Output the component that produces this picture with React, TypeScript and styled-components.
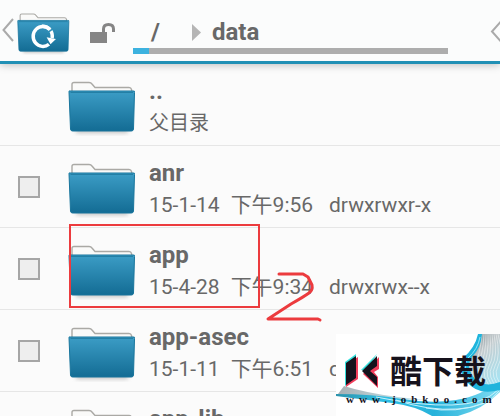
import React from "react";
import styled, { createGlobalStyle } from "styled-components";

const Global = createGlobalStyle`
  * { box-sizing: border-box; }
  html, body { margin: 0; background: #fbfbfb; }
  body { font-family: Roboto, "Noto Sans CJK SC", sans-serif; color: #686868; }
  button, input { font: inherit; color: inherit; }
`;

const Screen = styled.main`
  position: relative;
  height: 100vh;
  overflow: hidden;
`;

const Header = styled.header`
  display: flex;
  align-items: flex-start;
  height: 64px;
  background: #fbfcfc;
  border-bottom: 3px solid #2190b5;
  box-shadow: 0 1px 8px rgba(0, 0, 0, 0.25);
  position: relative;
`;

const PlainButton = styled.button`
  display: flex;
  padding: 0;
  border: 0;
  background: none;
`;

const BackButton = styled(PlainButton)`
  padding: 12px 0 0 2px;
`;

const LockButton = styled(PlainButton)`
  margin: 22px 17px 0 19px;
`;

const MoreButton = styled(PlainButton)`
  margin: 21px 0 0 42px;
`;

const PathBar = styled.nav`
  flex: 1;
  padding-top: 16px;
`;

const Crumbs = styled.div`
  display: flex;
  align-items: center;
  height: 32px;
  padding-left: 18px;
`;

const Crumb = styled.a`
  color: inherit;
  text-decoration: none;
  font-size: 24px;
  font-weight: 700;
  line-height: 32px;
`;

const CrumbArrow = styled.svg`
  margin: 0 11px 0 32px;
`;

const Track = styled.div`
  height: 6px;
  background: #adadad;
`;

const Fill = styled.div`
  width: 5%;
  height: 100%;
  background: #3cb2df;
`;

const List = styled.ul`
  margin: 0;
  padding: 0;
  list-style: none;
`;

const Row = styled.li`
  display: grid;
  grid-template-columns: 68px 81px 1fr;
  height: 82px;
  border-bottom: 1px solid #e6e6e6;
`;

const Check = styled.input`
  appearance: none;
  align-self: center;
  width: 22px;
  height: 22px;
  margin: 0 0 0 18px;
  border: 2px solid #a6a6a6;
  background: #eee;
`;

const FolderSlot = styled.div`
  grid-column: 2;
  padding-top: 16px;
`;

const Info = styled.label`
  padding-top: 11px;
  white-space: nowrap;
`;

const Name = styled.div`
  font-size: 24px;
  font-weight: 700;
  line-height: 32px;
`;

const Meta = styled.div`
  display: grid;
  grid-template-columns: 180px 1fr;
  font-size: 21px;
  line-height: 32px;
`;

const Stamp = styled.span`
  display: flex;
  gap: 11px;
`;

const Parent = styled.div`
  font-size: 20px;
  line-height: 32px;
`;

const Highlight = styled.div`
  position: absolute;
  left: 69px;
  top: 224px;
  width: 191px;
  height: 84px;
  border: 2px solid #ec3b3e;
`;

const Stroke = styled.svg`
  position: absolute;
  left: 262px;
  top: 268px;
`;

const Brand = styled.a`
  position: absolute;
  right: 0;
  bottom: 0;
  display: grid;
  grid-template-rows: 59px 23px;
  width: 164px;
  background: #fff;
  color: #16121c;
  text-decoration: none;
  white-space: nowrap;
`;

const BrandArt = styled.svg`
  position: absolute;
  inset: 0;
`;

const BrandName = styled.span`
  position: relative;
  padding: 15px 0 0 54px;
  font-family: "Noto Sans CJK SC", sans-serif;
  font-size: 32px;
  font-weight: 700;
  line-height: 40px;
`;

const BrandSite = styled.span`
  position: relative;
  padding-left: 10px;
  font-family: "Liberation Serif", serif;
  font-size: 11px;
  font-weight: 700;
  line-height: 12px;
  letter-spacing: 5px;
`;

function FolderIcon({ id, width = 68, height = 56, sync = false }: { id: string; width?: number; height?: number; sync?: boolean }) {
  return (
    <svg width={width} height={height} viewBox="0 0 68 56" preserveAspectRatio="none" aria-hidden="true">
      <defs>
        <linearGradient id={id} x1="0" y1="0" x2="0" y2="1">
          <stop offset="0" stopColor="#3c9dc6" />
          <stop offset="1" stopColor="#136c94" />
        </linearGradient>
        <filter id={id + "s"} x="-10%" y="-100%" width="120%" height="300%">
          <feGaussianBlur stdDeviation="2" />
        </filter>
      </defs>
      <rect x="8" y="48" width="52" height="5" fill="#999" opacity=".6" filter={`url(#${id}s)`} />
      <path d="M4 13V4.500Q4 2.500 6 2.500H21Q23 2.500 24 4L27 7.500H61Q63 7.500 63.500 9.500L64 13Z" fill="#fafaf9" stroke="#aaa9a5" strokeWidth="1.400" />
      <path d="M1 11.500Q1 10.500 2 11H65Q67 10.500 66.500 12.500L65.500 49Q65.400 51 63.500 51H4.500Q2.600 51 2.500 49Z" fill={`url(#${id})`} stroke="#18759c" strokeWidth="1" />
      <path d="M2.500 12.500H65" stroke="#247fa5" strokeWidth="1" />
      {sync && (
        <g fill="none" stroke="#fff" strokeWidth="4.500">
          <path d="M42 22.500A12.500 13 0 1 0 41 42" />
          <path d="M32 18.500A12.500 13 0 0 1 45 34" />
          <path d="M38 33L50 35L43 42Z" fill="#fff" stroke="none" />
          <path d="M39 27L46 22" stroke="#2f8fb8" strokeWidth="2" />
        </g>
      )}
    </svg>
  );
}

const rows = [
  { name: "anr", date: "15-1-14", time: "下午9:56", mode: "drwxrwxr-x" },
  { name: "app", date: "15-4-28", time: "下午9:34", mode: "drwxrwx--x" },
  { name: "app-asec", date: "15-1-11", time: "下午6:51", mode: "d" },
  { name: "app-lib", date: "", time: "", mode: "" },
];

const veilLines = [0, 1, 2, 3, 4, 5, 6, 7, 8];

export default function App() {
  return (
    <Screen>
      <Global />
      <Header>
        <BackButton aria-label="Back">
          <svg width="15" height="42" viewBox="0 0 15 42" fill="none" stroke="#aaa" strokeWidth="2">
            <path d="M11 7L1.500 18L11 29" />
          </svg>
          <FolderIcon id="home" width={53} height={43} sync />
        </BackButton>
        <LockButton aria-label="Unlock">
          <svg width="27" height="22" viewBox="0 0 27 22">
            <path d="M1 10H18V21H1Z" fill="#858585" />
            <path d="M14.500 11V7Q14.500 2.500 19.500 2.500Q24.500 2.500 24.500 7V10" fill="none" stroke="#858585" strokeWidth="3" />
          </svg>
        </LockButton>
        <PathBar aria-label="Path">
          <Crumbs>
            <Crumb href="#root">/</Crumb>
            <CrumbArrow width="9" height="17" viewBox="0 0 9 17"><path d="M0 0L9 8.500L0 17Z" fill="#b5b5b5" /></CrumbArrow>
            <Crumb href="#data">data</Crumb>
          </Crumbs>
          <Track role="progressbar" aria-label="Storage used" aria-valuenow={5}><Fill /></Track>
        </PathBar>
        <MoreButton aria-label="More">
          <svg width="10" height="22" viewBox="0 0 10 22" fill="none" stroke="#aaa" strokeWidth="2">
            <path d="M11 .500L2 10.500L11 20.500" />
          </svg>
        </MoreButton>
      </Header>
      <List>
        <Row>
          <FolderSlot><FolderIcon id="up" /></FolderSlot>
          <Info as="div"><Name>..</Name><Parent>父目录</Parent></Info>
        </Row>
        {rows.map((r) => (
          <Row key={r.name}>
            <Check type="checkbox" id={"c-" + r.name} />
            <FolderSlot><FolderIcon id={"f-" + r.name} /></FolderSlot>
            <Info htmlFor={"c-" + r.name}>
              <Name>{r.name}</Name>
              <Meta>
                <Stamp><span>{r.date}</span><span>{r.time}</span></Stamp>
                <span>{r.mode}</span>
              </Meta>
            </Info>
          </Row>
        ))}
      </List>
      <Highlight />
      <Stroke width="64" height="56" viewBox="0 0 64 56" fill="none" stroke="#ec3b3e" strokeWidth="3" strokeLinecap="round" strokeLinejoin="round" aria-label="2">
        <path d="M17 6H41L46 9L50 17Q51 22 47 25Q43 28 29 36L6 51H56L58 52" />
      </Stroke>
      <Brand href="#jobkoo">
        <BrandArt width="164" height="82" viewBox="0 0 164 82" aria-hidden="true">
          <defs>
            <linearGradient id="wave" x1="0" y1="0" x2="1" y2="0">
              <stop offset="0" stopColor="#2b93ac" />
              <stop offset=".3" stopColor="#2fbfe4" />
              <stop offset=".6" stopColor="#27b2da" />
              <stop offset="1" stopColor="#7fdcf2" />
            </linearGradient>
            <linearGradient id="veil" x1="0" y1="0" x2=".6" y2="1">
              <stop offset="0" stopColor="#6f7b80" />
              <stop offset=".45" stopColor="#c4cccf" />
              <stop offset="1" stopColor="#a9e2f0" />
            </linearGradient>
            <linearGradient id="wedge" x1="0" y1="0" x2="1" y2="0">
              <stop offset="0" stopColor="#a8b0b3" />
              <stop offset="1" stopColor="#c8eef7" />
            </linearGradient>
          </defs>
          <path d="M8 52Q30 59 62 63L90 66Q50 66 2 60Z" fill="url(#wedge)" />
          <path d="M0 60Q36 60 66 65T120 66Q146 62 164 46V58Q146 76 122 82H96Q80 72 56 69T0 62Z" fill="url(#wave)" />
          <path d="M40 63Q84 72 116 71T162 56M60 66Q92 77 122 75T163 57M90 74Q120 80 148 69" fill="none" stroke="#c9f2fb" strokeWidth="1" />
          <path d="M145 0Q143 13 133 24Q126 35 136 47Q146 58 164 54V0Z" fill="url(#veil)" />
          <g fill="none" stroke="#fff" strokeOpacity=".45" strokeWidth="1">
            {veilLines.map((n) => (
              <path key={n} d={`M${146 + n * 2} 0Q${144 + n * 3} 22 ${138 + n * 3} 32T${145 + n * 3} 56`} />
            ))}
          </g>
          <path d="M142 0H146Q145 14 136 23Q129 33 139 45Q148 54 164 48V56Q142 62 131 48Q121 35 127 24Q139 14 142 0Z" fill="#1fb4dc" />
          <path d="M144 3Q142 15 132 24Q125 35 136 49" fill="none" stroke="#8de4f6" strokeWidth="1" />
          <path d="M9 28L20 20V44L9 52Z" fill="#35e0dc" />
          <path d="M11 30L22 23V45L10 53Z" fill="#f23e5c" />
          <path d="M10 29L20 22V44L10 51Z" fill="#16121c" />
          <path d="M25 36L41 20L30 37Z" fill="#35e0dc" />
          <path d="M27 40L43 23V35L38 38L42 43V54Z" fill="#f23e5c" />
          <path d="M26 37L41 22V32L34 37L41 43V52Z" fill="#16121c" />
        </BrandArt>
        <BrandName>酷下载</BrandName>
        <BrandSite>www.jobkoo.com</BrandSite>
      </Brand>
    </Screen>
  );
}
